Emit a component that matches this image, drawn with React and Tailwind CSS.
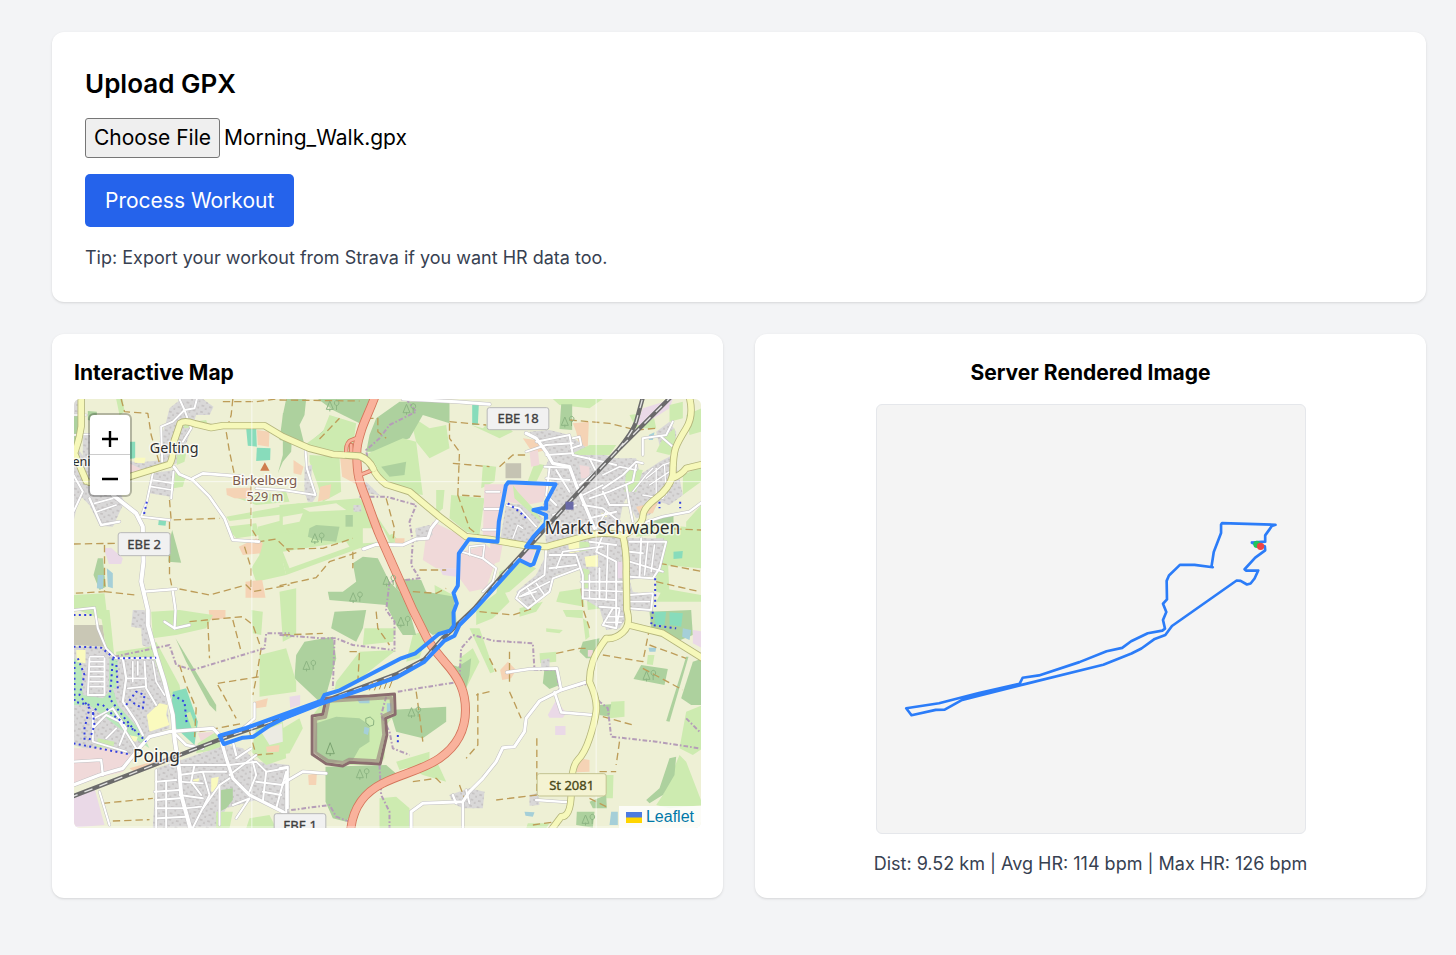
import React from "react";

const GRASS = "#cdebb0";
const WOOD = "#add19e";
const TOWN = "#d9d8d8";
const PINK = "#f0d9d9";
const LILAC = "#ead9e7";
const ORCHARD = "#f5d3b5";
const PITCH = "#88dcbb";
const SCHOOL = "#fafabe";
const WATER = "#a5cfd8";
const CREAM = "#eef0d5";

/* Land use, painted in order: [fill, polygon points] */
const AREAS = [
  // scattered meadows
  [GRASS, "140,12 160,12 165,50 150,60"],
  [GRASS, "215,770 260,740 330,870 345,960 300,900"],
  [GRASS, "480,300 560,330 660,320 650,290 560,300"],
  [GRASS, "470,395 560,385 570,420 500,430"],
  [GRASS, "545,645 580,650 575,720 550,715"],
  [GRASS, "1095,570 1150,600 1165,700 1130,710 1100,650"],
  [GRASS, "1030,720 1080,700 1050,790 1010,800"],
  [GRASS, "1170,790 1210,760 1230,800 1190,880 1170,860"],
  [GRASS, "1220,640 1300,580 1320,620 1270,670 1220,690"],
  [GRASS, "1205,90 1240,100 1280,60 1330,110 1290,130"],
  [GRASS, "1020,60 1080,100 1130,90 1140,160 1080,190 1040,140"],
  [GRASS, "1760,400 1790,380 1800,600 1760,590"],
  [GRASS, "1680,60 1750,50 1760,100 1700,100"],
  [GRASS, "1850,60 1895,40 1895,110 1860,120"],
  [GRASS, "1840,240 1895,215 1895,260 1840,300"],
  [GRASS, "1690,395 1760,385 1750,420 1700,425"],
  [GRASS, "1550,590 1600,580 1600,640 1555,645"],
  [GRASS, "1350,640 1420,620 1400,650 1350,665"],
  [GRASS, "1200,700 1230,700 1275,830 1262,835"],
  [GRASS, "12,600 105,595 115,680 12,640"],
  [GRASS, "590,1085 660,1075 700,1000 690,970 640,1000"],
  [GRASS, "1000,1110 1100,1095 1130,1160 1060,1140"],
  // north west
  [TOWN, "12,12 25,12 25,160 90,255 150,290 165,320 130,395 90,392 60,330 30,300 12,380"],
  [TOWN, "40,120 75,118 75,160 190,200 230,200 280,195 280,215 180,240 60,260 40,200"],
  [TOWN, "300,40 335,12 400,12 432,35 420,60 380,60 352,140 322,205 275,215 270,140 290,80"],
  [TOWN, "245,235 315,225 305,305 240,295"],
  [WOOD, "12,60 28,60 28,150 12,170"],
  [WOOD, "55,48 82,50 82,80 55,75"],
  [GRASS, "318,230 350,240 340,275 312,280"],
  [GRASS, "338,85 410,75 415,90 345,100"],
  [GRASS, "322,180 350,175 345,200 322,210"],
  [WOOD, "640,55 672,45 665,170 640,200 625,235 640,180"],
  [PITCH, "530,100 560,100 562,155 535,152"],
  [PITCH, "562,158 603,160 602,195 560,198"],
  [ORCHARD, "562,105 600,110 598,155 565,150"],
  [PITCH, "175,140 197,140 197,190 175,192"],
  [SCHOOL, "195,188 228,188 225,205 195,203"],
  [PINK, "180,205 215,222 210,240 180,238"],
  [ORCHARD, "470,280 545,278 545,312 495,310 472,300"],
  [GRASS, "470,365 690,325 700,350 480,378"],
  [GRASS, "565,395 660,370 720,380 720,440 640,500 650,540 560,560 545,520 570,480"],
  [ORCHARD, "508,455 560,430 580,445 572,475 520,480"],
  [ORCHARD, "528,560 578,555 588,608 528,608"],
  [WOOD, "308,405 335,503 296,500 302,430"],
  [LILAC, "103,460 125,458 160,490 155,507 118,507"],
  [WOOD, "85,490 100,490 105,540 110,575 90,585 72,540"],
  [WATER, "85,540 102,540 100,582 82,580"],
  [WATER, "112,520 130,535 130,580 115,575"],
  [ORCHARD, "418,645 468,645 468,670 420,675"],
  [PITCH, "268,375 290,378 288,392 266,390"],
  // north centre
  [WOOD, "650,12 710,12 705,60 690,90 705,150 630,135 640,60"],
  [WOOD, "745,12 900,12 890,40 870,85 790,45"],
  [WOOD, "770,100 790,130 755,150 735,130"],
  [WOOD, "920,70 990,20 1140,20 1140,85 1060,60 1020,130 960,150 920,170 890,170 900,120"],
  [GRASS, "780,60 860,85 850,160 800,175 705,150 760,110"],
  [GRASS, "720,180 810,185 815,290 760,320 745,270 720,200"],
  [GRASS, "885,180 1000,130 1040,140 1060,300 1000,290 950,260 900,230"],
  [WOOD, "935,215 1010,200 1005,240 960,245"],
  [ORCHARD, "812,190 855,190 865,270 818,245"],
  [ORCHARD, "672,195 702,215 695,240 672,235"],
  [ORCHARD, "752,275 785,268 780,310 745,320"],
  [TOWN, "705,215 728,210 725,250 742,300 730,320 715,320 705,290"],
  [GRASS, "630,330 870,310 920,360 990,440 870,460 650,540 640,500 700,420 630,410"],
  [CREAM, "640,365 700,355 690,380 640,390"],
  [CREAM, "700,340 800,325 830,345 720,350"],
  [WOOD, "720,400 740,390 810,395 800,440 740,435 715,425"],
  [WOOD, "828,360 850,360 850,395 828,395"],
  [CREAM, "640,470 830,440 840,455 660,520"],
  [CREAM, "880,400 940,400 960,440 880,445"],
  [TOWN, "870,280 890,260 935,305 955,345 930,365 900,340"],
  [CREAM, "895,295 1000,315 1010,400 960,420 920,360"],
  [TOWN, "852,330 875,330 875,350 852,350"],
  [GRASS, "1100,285 1125,285 1120,340 1100,360"],
  [GRASS, "1145,300 1245,310 1230,420 1190,410 1140,370"],
  [GRASS, "1240,210 1280,215 1275,260 1235,280"],
  [PITCH, "1208,28 1228,28 1225,90 1208,90"],
  [ORCHARD, "975,430 1005,430 1005,445 978,450"],
  [PINK, "1090,380 1190,430 1165,475 1162,520 1100,520 1060,495 1070,420"],
  [PINK, "1175,470 1250,450 1285,480 1250,580 1200,590 1170,550"],
  [LILAC, "1110,520 1165,520 1160,545 1120,540"],
  [PINK, "1245,268 1310,268 1290,430 1240,420"],
  [PINK, "1310,265 1440,270 1420,320 1370,330 1310,320"],
  [TOWN, "1310,325 1370,330 1420,370 1370,450 1290,450"],
  [GRASS, "1330,270 1345,290 1400,350 1420,385 1380,350 1335,310"],
  [TOWN, "1038,400 1080,390 1090,420 1060,435 1040,440"],
  // central woods
  [WOOD, "850,505 880,485 925,490 960,560 1000,600 1020,650 1040,720 1000,720 980,690 950,630 780,615 775,590 820,590 860,560"],
  [WOOD, "975,550 1055,555 1070,590 1155,605 1150,700 1090,720 1050,690 1040,640 980,580"],
  [WOOD, "795,650 890,645 880,700 860,740 785,700"],
  [GRASS, "630,590 680,580 680,720 640,740"],
  [GRASS, "885,700 980,700 970,740 880,750"],
  [WOOD, "705,740 790,725 800,790 770,900 750,920 675,850 680,780"],
  [GRASS, "570,780 650,760 680,860 680,890 570,905"],
  [LILAC, "660,905 692,900 692,930 662,940"],
  [GRASS, "870,770 980,765 860,860 795,885 800,860"],
  [WOOD, "1120,800 1165,815 1205,790 1200,840 1190,880 1150,850"],
  [WOOD, "960,945 1130,935 1130,980 1060,1030 980,1010"],
  [GRASS, "730,960 770,910 970,900 975,960 950,990 945,1090 930,1110 775,1110 735,1070"],
  [WOOD, "740,985 800,965 870,970 900,990 900,1040 870,1060 850,1095 770,1105 735,1070"],
  [WATER, "860,910 900,910 900,925 870,925"],
  [WATER, "952,925 966,925 966,955 952,950"],
  [WATER, "885,995 900,1000 895,1020 882,1015"],
  [WOOD, "768,1115 950,1110 985,1140 900,1180 850,1250 830,1280 790,1270 768,1220"],
  [GRASS, "980,1100 1080,1070 1080,1100 990,1125"],
  [GRASS, "930,1210 980,1205 1020,1240 1020,1300 930,1300"],
  [ORCHARD, "716,1140 742,1135 740,1170 718,1170"],
  [TOWN, "1140,1200 1200,1180 1245,1190 1240,1240 1180,1240 1150,1225"],
  // north east
  [GRASS, "1450,12 1600,12 1560,40 1470,30"],
  [WOOD, "1475,28 1508,28 1508,105 1470,102"],
  [ORCHARD, "1510,85 1558,80 1555,155 1530,155 1520,110"],
  [LILAC, "1720,40 1810,12 1800,40 1720,90 1700,90"],
  [GRASS, "1800,30 1840,20 1840,70 1800,80"],
  [TOWN, "1380,110 1440,105 1500,120 1560,165 1640,190 1700,190 1710,230 1660,330 1650,380 1600,410 1500,430 1430,450 1420,330 1450,270 1430,210 1440,190"],
  [TOWN, "1710,240 1770,200 1810,180 1830,250 1840,300 1800,330 1770,320 1740,360 1700,370 1670,310"],
  [TOWN, "1760,110 1800,80 1820,110 1820,150 1770,150"],
  [WATER, "1738,120 1755,112 1750,135 1738,135"],
  [TOWN, "1440,460 1600,420 1690,430 1800,430 1780,500 1760,540 1680,555 1690,590 1745,600 1740,650 1685,645 1650,700 1610,705 1590,640 1540,610 1530,520 1460,540 1430,600 1370,640 1340,590 1400,540"],
  [GRASS, "1395,205 1425,210 1400,262 1375,258"],
  [ORCHARD, "1360,130 1400,135 1430,165 1390,175"],
  [PINK, "1380,170 1405,165 1410,210 1385,215"],
  ["#c5c3b3", "1308,205 1355,205 1355,250 1308,250"],
  [PINK, "1530,210 1560,215 1560,250 1535,250"],
  [GRASS, "1500,180 1560,150 1640,150 1620,180"],
  [GRASS, "1670,220 1720,225 1700,290 1665,290"],
  [GRASS, "1780,130 1815,100 1820,150 1800,180 1760,170"],
  [GRASS, "1785,390 1895,400 1895,520 1780,510"],
  [GRASS, "1780,580 1895,600 1895,620 1760,620"],
  [PITCH, "1812,470 1840,468 1838,490 1812,492"],
  [WOOD, "1750,370 1812,358 1812,385 1750,385"],
  [ORCHARD, "1700,335 1765,322 1750,355 1710,358"],
  [GRASS, "1850,380 1895,330 1895,400 1850,405"],
  [SCHOOL, "1495,440 1530,430 1530,470 1500,475"],
  [SCHOOL, "1545,485 1585,480 1585,515 1550,515"],
  [SCHOOL, "1595,355 1615,350 1612,365 1595,368"],
  [GRASS, "1530,440 1560,440 1560,465 1530,470"],
  [GRASS, "1540,520 1560,525 1560,580 1545,580"],
  [LILAC, "1640,500 1660,500 1660,550 1640,550"],
  [GRASS, "1470,590 1540,580 1545,635 1460,620"],
  [PINK, "1262,440 1300,445 1290,500 1262,510"],
  [GRASS, "1290,530 1355,500 1400,520 1320,590 1280,600"],
  [LILAC, "1340,500 1380,460 1400,460 1380,510"],
  // south east
  [WOOD, "1740,650 1865,645 1870,720 1820,740 1745,700"],
  [PITCH, "1755,650 1790,650 1785,690 1755,690"],
  [PITCH, "1800,652 1840,655 1835,695 1800,690"],
  [WATER, "1840,700 1865,705 1860,735 1838,725"],
  [LILAC, "1870,705 1900,710 1900,760 1870,745"],
  [GRASS, "1480,645 1540,645 1540,670 1490,665"],
  [GRASS, "1430,700 1480,705 1470,715 1430,710"],
  [GRASS, "1540,670 1555,680 1560,725 1548,735"],
  [WOOD, "1540,740 1590,730 1580,790 1550,790 1530,770"],
  [PINK, "1555,765 1570,765 1570,785 1555,785"],
  [GRASS, "1410,775 1460,770 1460,800 1412,805"],
  [TOWN, "1415,795 1440,790 1440,820 1415,820"],
  [WOOD, "1425,820 1465,822 1470,870 1440,882 1420,865"],
  [ORCHARD, "1292,825 1315,800 1340,825 1325,850 1298,855"],
  [LILAC, "1435,960 1460,915 1490,955 1480,968 1440,968"],
  [LILAC, "1457,993 1488,993 1488,1020 1457,1020"],
  [WOOD, "1715,810 1795,822 1785,870 1692,852"],
  [GRASS, "1735,780 1755,780 1750,810 1732,808"],
  [WATER, "1737,758 1760,758 1758,770 1740,770"],
  [GRASS, "1625,920 1665,918 1665,965 1620,970"],
  [WOOD, "1590,930 1625,928 1620,965 1590,960"],
  [WOOD, "1850,785 1857,785 1800,980 1790,978"],
  [WOOD, "1870,800 1900,790 1900,930 1865,930 1835,910"],
  [GRASS, "1850,950 1900,930 1900,1060 1870,1080 1830,1060"],
  [GRASS, "1780,1200 1830,1080 1850,1100 1900,1230 1800,1240 1760,1230"],
  [WOOD, "1800,1090 1820,1085 1815,1140 1780,1200 1740,1225 1730,1215 1770,1180"],
  [ORCHARD, "1530,1090 1560,1095 1560,1130 1520,1132"],
  [GRASS, "1610,1140 1632,1140 1630,1210 1600,1210"],
  [WOOD, "1560,1220 1610,1200 1612,1240 1570,1240"],
  [WOOD, "1522,1250 1575,1250 1570,1298 1520,1290"],
  [WATER, "1625,1250 1645,1250 1645,1290 1620,1290"],
  [WATER, "1365,1250 1395,1252 1390,1265 1368,1262"],
  [TOWN, "1380,1200 1405,1195 1410,1230 1380,1232"],
  [GRASS, "1375,1285 1440,1285 1430,1300 1370,1300"],
  // south west
  [TOWN, "190,645 225,645 245,700 240,760 218,750 215,700 185,695"],
  [GRASS, "245,650 330,645 430,660 410,700 320,720 250,730"],
  ["#c9c7b5", "12,690 100,690 108,755 12,750"],
  [GRASS, "92,645 120,645 135,790 110,760"],
  [GRASS, "140,770 240,755 245,790 140,790"],
  [TOWN, "12,755 110,755 140,795 255,795 290,900 300,1000 240,1020 170,1100 12,1050"],
  ["#b9e8bb", "12,790 35,800 40,900 100,910 130,880 145,930 215,1010 240,1060 150,1000 60,930 12,930"],
  ["#b9e8bb", "120,790 145,795 140,880 118,880"],
  [WOOD, "318,730 440,930 440,950 420,930 350,800"],
  [PITCH, "310,890 350,880 385,980 375,1050 320,1000 305,930"],
  [GRASS, "350,955 362,950 385,1010 370,1010"],
  [SCHOOL, "232,960 270,925 295,930 290,960 300,990 240,1010"],
  [SCHOOL, "20,765 48,765 48,805 22,800"],
  [SCHOOL, "175,1020 205,1025 200,1040 178,1035"],
  [PINK, "12,1060 110,1060 190,1080 160,1130 12,1165"],
  [GRASS, "85,1030 135,1040 130,1060 80,1055"],
  [PINK, "385,1015 430,1010 430,1035 395,1040"],
  [ORCHARD, "435,1050 460,1045 460,1068 435,1065"],
  [GRASS, "440,1010 460,1060 380,1075 385,1045"],
  [ORCHARD, "180,1120 300,1085 300,1100 200,1135"],
  [LILAC, "12,1210 75,1180 105,1290 12,1298"],
  [TOWN, "260,1120 470,1050 520,1060 560,1100 660,1110 660,1260 560,1215 470,1240 440,1298 250,1298"],
  [WOOD, "455,1185 490,1180 490,1215 470,1240 450,1250"],
  [SCHOOL, "425,1150 448,1145 440,1190 425,1190"],
  [SCHOOL, "362,1155 390,1150 385,1165 365,1170"],
  [GRASS, "440,1250 490,1250 480,1300 440,1300"],
  [GRASS, "560,1000 640,980 650,1090 590,1110 545,1070"],
  ["#ecebe3", "575,1010 638,985 640,1040 600,1050"],
  [ORCHARD, "555,920 595,910 590,935 560,940"],
  [ORCHARD, "590,1055 630,1050 628,1070 592,1072"],
  [GRASS, "540,1270 600,1260 620,1300 530,1300"],
];

/* White streets: [width, points] */
const STREETS = [
  [12, "130,300 200,355 220,395 222,500 215,560 235,645 235,690 260,780 285,860 310,960 315,1030 330,1130 335,1200 362,1298"],
  [8, "313,215 330,238 370,255 420,305 465,370 490,435 568,440"],
  [8, "370,250 400,235 520,245"],
  [6, "250,235 232,320 215,365 300,375"],
  [6, "312,230 305,310"],
  [6, "330,12 345,45 310,80 275,95 278,200"],
  [6, "382,12 375,40 345,45 365,100 340,140"],
  [5, "250,255 310,265"],
  [5, "245,275 308,285"],
  [7, "60,310 95,390 150,380"],
  [5, "75,325 130,310"],
  [5, "82,350 140,330"],
  [6, "12,350 40,290 12,240"],
  [5, "12,120 60,118"],
  [5, "12,60 50,60"],
  [7, "222,590 320,582"],
  [7, "310,590 318,645 315,700"],
  [6, "12,645 75,638 85,700 110,760 140,790 260,790"],
  [7, "285,680 315,700 360,690"],
  [9, "1000,12 1160,20 1260,28"],
  [6, "708,165 712,220 738,300 640,285 560,280"],
  [9, "882,462 920,448 1000,450 1040,432 1075,430 1085,400 1105,375"],
  [6, "1175,470 1240,490 1280,520 1270,560 1240,590"],
  [5, "1200,480 1200,455 1245,450 1240,490"],
  [6, "1250,290 1290,290"],
  [6, "1245,342 1290,342"],
  [6, "1240,404 1280,404"],
  [5, "1310,330 1350,340 1400,395"],
  [4, "1330,430 1345,390 1360,400"],
  [10, "1370,115 1400,130 1430,170 1450,205 1500,215 1520,270 1550,340 1575,400"],
  [6, "1400,140 1500,120 1510,180 1600,200 1640,210"],
  [6, "1370,170 1430,150 1510,145"],
  [6, "1430,180 1510,175"],
  [6, "1425,215 1500,218"],
  [6, "1440,220 1430,300 1460,330"],
  [6, "1430,250 1500,255"],
  [6, "1510,130 1530,125 1535,150 1505,160"],
  [6, "1460,225 1500,290"],
  [6, "1560,190 1580,230 1530,270"],
  [6, "1600,280 1660,240 1700,200 1720,205"],
  [6, "1560,310 1620,290 1690,260 1700,210"],
  [5, "1600,240 1650,215 1700,225"],
  [5, "1540,300 1600,270"],
  [6, "1540,330 1600,340 1650,380 1655,415"],
  [6, "1600,290 1620,330 1680,330"],
  [6, "1560,370 1640,350"],
  [6, "1670,270 1680,330 1690,380"],
  [5, "1580,400 1610,350"],
  [5, "1450,360 1520,330"],
  [6, "1720,180 1720,130 1790,120 1810,80"],
  [6, "1775,125 1810,155"],
  [7, "1700,390 1780,365 1860,350 1900,320"],
  [4, "1730,250 1780,210 1810,200"],
  [4, "1740,270 1800,230"],
  [4, "1720,300 1780,310 1810,260"],
  [4, "1690,290 1730,240 1750,220"],
  [4, "1760,220 1760,300"],
  [4, "1785,210 1790,300"],
  [6, "1430,460 1425,540 1350,590 1340,610 1375,640 1440,590 1450,550 1530,520"],
  [5, "1375,580 1400,620"],
  [5, "1400,565 1425,600"],
  [5, "1360,600 1400,580 1440,560"],
  [5, "1350,605 1400,590"],
  [6, "1440,480 1520,480 1540,540 1540,610 1640,615"],
  [6, "1440,520 1520,510"],
  [5, "1460,520 1480,470 1600,455"],
  [6, "1535,560 1660,560"],
  [6, "1600,420 1580,470 1640,500 1640,690"],
  [6, "1560,440 1640,450"],
  [6, "1590,520 1590,610"],
  [5, "1615,450 1610,615"],
  [5, "1540,585 1670,590"],
  [5, "1560,540 1560,610"],
  [6, "1680,440 1790,440 1770,520 1750,550 1680,545"],
  [6, "1680,470 1720,475"],
  [6, "1680,500 1780,530"],
  [6, "1680,600 1750,595 1745,645 1680,640"],
  [5, "1680,620 1740,620"],
  [5, "1735,440 1725,540"],
  [6, "1715,430 1710,545"],
  [5, "1755,450 1745,530"],
  [6, "1590,635 1650,640"],
  [6, "1630,640 1600,690 1640,700 1650,645"],
  [5, "1620,665 1660,665"],
  [5, "1610,682 1655,682"],
  [8, "1312,832 1380,822 1462,820 1475,885"],
  [9, "1560,858 1475,885 1410,918 1370,970 1365,1010 1335,1055 1300,1058 1280,1100 1240,1150 1200,1190 1180,1220 1060,1225 1025,1250 1025,1300"],
  [8, "1455,892 1475,952 1570,960"],
  [7, "1180,1220 1180,1300"],
  [7, "1150,1200 1160,1225"],
  [6, "1190,1185 1200,1225"],
  [7, "1400,1215 1500,1222"],
  [10, "12,1170 90,1140 160,1120 200,1070 240,1025 300,1010 430,1000 450,1020 470,1090 490,1150 540,1200 640,1250 700,1300"],
  [7, "12,1100 95,1095 100,1140"],
  [8, "315,1015 350,1050 400,1060"],
  [7, "160,790 170,850 160,920 200,980 220,1020"],
  [6, "60,790 55,900 105,900 105,790"],
  [5, "62,785 102,785"],
  [5, "62,800 102,800"],
  [5, "62,815 102,815"],
  [5, "62,830 102,830"],
  [5, "62,845 102,845"],
  [5, "62,860 102,860"],
  [5, "62,875 102,875"],
  [6, "70,950 70,1040 170,1070"],
  [6, "70,1000 110,960 150,980 200,1060"],
  [6, "110,1030 140,1000"],
  [6, "130,940 170,1000 150,1050"],
  [5, "75,970 130,940"],
  [5, "190,800 190,860"],
  [6, "225,800 230,880 260,930"],
  [5, "170,850 230,850"],
  [5, "205,800 205,840"],
  [5, "175,880 225,875"],
  [5, "250,800 260,860 285,900"],
  [6, "260,1125 260,1298"],
  [6, "260,1160 320,1155"],
  [6, "255,1190 330,1185"],
  [6, "260,1215 330,1210"],
  [6, "260,1240 340,1240"],
  [6, "265,1270 350,1265"],
  [6, "290,1160 290,1298"],
  [6, "320,1110 470,1110"],
  [6, "375,1110 365,1160 395,1200"],
  [6, "330,1140 400,1130 420,1200 370,1298"],
  [6, "400,1130 470,1130"],
  [5, "330,1160 400,1165"],
  [6, "330,1200 400,1210"],
  [5, "345,1240 395,1235"],
  [6, "480,1110 560,1100 590,1130 650,1120"],
  [6, "480,1140 520,1110 560,1080"],
  [6, "540,1190 560,1140 550,1100"],
  [6, "580,1220 590,1130"],
  [6, "620,1240 650,1130 650,1300"],
  [6, "560,1160 640,1170"],
  [6, "580,1190 635,1200"],
  [6, "500,1270 540,1210 490,1230"],
  [6, "400,1240 450,1170 480,1150"],
  [6, "450,1290 450,1170"],
  [6, "90,1190 120,1290"],
  [7, "500,1080 490,1040"],
  [7, "555,925 555,970 520,1000"],
  [6, "500,1090 545,1060"],
  [8, "640,1165 700,1130 770,1135"],
  [6, "630,1120 655,1115 655,1240"],
];

/* Farm tracks: brown dashed lines */
const TRACKS = [
  "155,12 165,50 235,55 245,120 270,205",
  "490,12 485,60 470,110 480,170 495,240",
  "460,20 560,20 620,12",
  "300,315 305,375 450,370",
  "545,270 545,400 570,440 620,432 660,470",
  "12,447 140,445",
  "105,450 105,590 12,595",
  "105,590 200,600",
  "300,380 300,540 310,590",
  "330,582 420,600 530,570 550,590 660,570",
  "525,455 545,520 545,580",
  "650,462 760,460 850,430",
  "630,572 740,548 780,500 870,470",
  "850,470 850,520",
  "630,15 870,18",
  "750,132 810,70",
  "890,70 925,70 925,110 950,130",
  "950,310 975,400 970,440",
  "1140,85 1140,130 1170,170 1165,300 1240,305",
  "1165,300 1200,400 1250,440",
  "1150,205 1260,215",
  "1140,80 1250,90",
  "1050,525 1130,525",
  "1030,590 1100,595 1130,580",
  "1290,215 1330,180 1370,180",
  "1500,75 1620,85 1700,105 1760,100",
  "1780,400 1895,405",
  "1760,560 1890,590",
  "1770,505 1900,530",
  "360,680 410,675 520,665 550,690 575,760 560,850 550,900",
  "415,680 420,790",
  "490,675 515,770",
  "330,810 350,870 380,940 375,1030",
  "445,865 570,845",
  "445,870 500,970",
  "100,1225 250,1210",
  "130,1278 240,1274",
  "540,1010 560,1080 620,1075",
  "390,1010 520,985",
  "640,720 760,715",
  "840,770 870,770 865,860",
  "1040,890 1050,960 1060,1040",
  "920,650 925,700 960,750",
  "1260,790 1280,830",
  "1320,770 1320,860",
  "1320,890 1355,970",
  "1402,1030 1402,1200 1280,1215",
  "1225,895 1225,1050 1190,1090",
  "1260,890 1220,900",
  "1030,1160 1100,1150 1120,1170",
  "1170,1170 1185,1210",
  "1460,775 1530,760 1550,760",
  "1600,780 1720,800 1740,700",
  "1720,820 1840,885",
  "1740,750 1850,790",
  "1600,965 1690,990",
  "1650,1040 1640,1110",
  "1590,1130 1640,1130",
  "1230,650 1330,660 1390,640",
  "1535,580 1540,640 1560,700",
  "1560,1210 1620,1240",
  "1390,1290 1460,1280",
];

/* Municipal boundaries: mauve dashed lines */
const BOUNDARIES = [
  "1010,12 1040,50 960,90 930,130 890,165 900,230",
  "870,305 950,305 1040,330 1020,380 1030,440 1025,510 1050,550 960,560 950,645 975,680 975,770",
  "135,785 300,750 320,810 370,825 585,760 590,715 660,715",
  "630,720 760,730 800,730 850,750 970,765",
  "795,735 790,880",
  "985,890 1170,860",
  "1170,850 1175,760 1210,720 1270,737 1390,745 1395,825 1460,825 1470,885 1560,865 1590,920 1615,940 1625,1025 1760,1040 1890,1060",
  "950,905 935,960 960,1010 970,1060 1020,1080",
  "930,1110 935,1200 960,1250 960,1300",
  "665,1245 780,1230 800,1265 840,1280",
  "1850,970 1890,1010",
];

/* Streams and footways: blue dots */
const DOTTED = [
  "25,790 45,840 30,900 60,940 45,1000 45,1040",
  "130,790 125,860 120,910 150,950 190,1000 230,1040",
  "15,800 15,920 60,930",
  "145,880 140,800",
  "12,755 95,758 135,790 260,788",
  "12,1045 180,1078",
  "170,930 200,890 225,900 220,940 185,920",
  "310,900 345,920 352,990",
  "12,660 75,660",
  "100,930 130,960 200,1010",
  "70,960 90,920",
  "60,1035 75,990 70,950",
  "232,320 222,365",
  "1315,325 1350,350 1370,370",
  "1757,550 1757,645",
  "1750,650 1745,690 1820,700",
  "1770,320 1770,340",
  "1832,320 1832,340",
  "985,1020 985,1050",
];

const MOTORWAY =
  "M918 0C900 50 884 78 876 105S860 150 862 180C862 240 870 262 885 300S915 385 930 420L1030 645L1060 705C1080 750 1100 770 1125 800C1170 850 1188 890 1188 945C1188 1010 1160 1055 1110 1090C1060 1125 985 1140 940 1165C890 1190 850 1230 843 1310";
const SLIPS = "M874 124L840 138Q827 150 831 178M866 242L902 228M845 150V172";
const YELLOW =
  "M35 0V95Q30 135 15 175L50 258M60 262L180 245L300 208Q312 190 310 150L332 85Q345 75 375 86L425 98L460 92H585L640 125L720 160L790 178L870 183Q900 195 910 220T950 268L1020 290L1110 365L1190 425L1260 433L1370 452L1430 455L1530 428Q1600 405 1660 422M1858 0Q1875 60 1850 100T1818 160T1810 240Q1800 280 1760 310T1720 365T1660 422Q1672 470 1670 530L1672 645Q1685 690 1660 712T1610 730Q1580 770 1570 800T1560 860Q1585 915 1580 950T1560 1030T1525 1095T1505 1190T1475 1265L1445 1305M1808 250Q1835 240 1850 220L1900 208M1678 690L1780 715L1900 790";
const RAIL =
  "M0 1208L460 1030L650 965L760 920L980 838L1065 793L1120 730L1215 640L1300 540L1410 420L1500 320L1645 165L1810 0M1645 165Q1690 110 1700 80L1722 0";
const ROUTE =
  "1392,345 1415,340 1430,341 1430,320 1458,268 1316,262 1309,272 1302,310 1288,380 1284,440 1225,435 1198,433 1168,475 1165,572 1152,594 1162,625 1152,652 1153,692 1142,707 1108,717 1038,775 995,790 808,887 765,900 756,917 630,963 530,999 450,1022 463,1047 520,1028 552,1025 600,992 650,967 760,924 980,848 1065,800 1125,737 1155,722 1170,690 1215,645 1350,495 1382,511 1392,507 1410,457 1370,455 1392,425 1428,385 1430,360 1392,345";

const RENDERED_ROUTE =
  "1148,127 1188,124 1188,105 1208,77 1219,73 1058,68 1055,72 1055,98 1033,155 1026,200 1030,201 975,194 931,194 898,226 891,242 892,298 880,311 890,336 880,360 886,386 878,392 834,400 784,424 757,444 710,454 628,487 506,527 457,534 448,552 325,580 205,611 106,626 122,647 195,631 222,630 272,602 325,588 448,557 700,495 785,461 815,446 855,417 887,405 907,378 1102,241 1114,242 1133,253 1144,250 1156,235 1167,211 1130,211 1126,207 1158,172 1188,150 1187,138 1165,133 1148,127";

function Shield({ x, y, w, h, label, tone = "grey" }) {
  const yellow = tone === "yellow";
  const ink = yellow ? "#4a4a18" : "#3f3f3f";
  return (
    <g>
      <rect
        x={x}
        y={y}
        width={w}
        height={h}
        rx="7"
        fill={yellow ? "#f4f3d2" : "#f1f1f1"}
        stroke={yellow ? "#c3c391" : "#b8b8b8"}
        strokeWidth="3"
      />
      <text
        x={x + w / 2}
        y={y + h / 2 + 14}
        textAnchor="middle"
        fontSize="39"
        fill={ink}
        stroke={ink}
        strokeWidth="1"
      >
        {label}
      </text>
    </g>
  );
}

function Place({ x, y, size, children, fill = "#2e2e2e" }) {
  return (
    <text
      x={x}
      y={y}
      textAnchor="middle"
      fontSize={size}
      fill={fill}
      stroke="#ffffff"
      strokeOpacity="0.7"
      strokeWidth="9"
      strokeLinejoin="round"
      paintOrder="stroke"
    >
      {children}
    </text>
  );
}

const TREES = [
  [785, 30], [1015, 40], [740, 428], [955, 555], [855, 605], [715, 810], [875, 1135], [1490, 78],
  [1030, 950], [1552, 1272], [998, 678], [1735, 840],
];

function MapTiles() {
  return (
    <svg
      viewBox="12 12 1884 1287"
      preserveAspectRatio="xMidYMid slice"
      className="block h-full w-full font-['Noto_Sans',sans-serif]"
      role="img"
      aria-label="Map of the route between Poing and Markt Schwaben"
    >
      <defs>
        <pattern id="houses" width="23" height="19" patternUnits="userSpaceOnUse" patternTransform="rotate(12)">
          <path d="M3 3h8v5h-8zM15 10h5v6h-5z" fill="#c6c3c3" />
        </pattern>
      </defs>
      <rect width="1910" height="1310" fill={CREAM} />
      {AREAS.map(([fill, points], i) => (
        <g key={i}>
          <polygon points={points} fill={fill} />
          {fill === TOWN && <polygon points={points} fill="url(#houses)" />}
        </g>
      ))}
      <g fill="none" strokeLinejoin="round" strokeLinecap="round">
        {TRACKS.map((p, i) => (
          <polyline key={i} points={p} stroke="#bd9c58" strokeWidth="4" strokeDasharray="22 12" strokeLinecap="butt" />
        ))}
        {BOUNDARIES.map((p, i) => (
          <polyline key={i} points={p} stroke="#b59db8" strokeWidth="6" strokeDasharray="14 6 5 6" strokeLinecap="butt" />
        ))}
        {STREETS.map(([w, p], i) => (
          <polyline key={i} points={p} stroke="#c2c0c2" strokeWidth={w + 3} />
        ))}
        {STREETS.map(([w, p], i) => (
          <polyline key={i} points={p} stroke="#ffffff" strokeWidth={w} />
        ))}
        {DOTTED.map((p, i) => (
          <polyline key={i} points={p} stroke="#3440e0" strokeWidth="6" strokeDasharray="6 10" strokeLinecap="butt" />
        ))}
        <path d={YELLOW} stroke="#b4b57c" strokeWidth="22" />
        <path d={YELLOW} stroke="#f6f8ba" strokeWidth="17" />
        <path d={MOTORWAY} stroke="#d4745a" strokeWidth="27" />
        <path d={SLIPS} stroke="#d4745a" strokeWidth="13" />
        <path d={MOTORWAY} stroke="#f9b29c" strokeWidth="22" />
        <path d={SLIPS} stroke="#f9b29c" strokeWidth="8" />
        <path d="M835 181L870 183Q900 195 910 220" stroke="#b4b57c" strokeWidth="22" />
        <path d="M825 180L870 183Q900 195 912 222" stroke="#f6f8ba" strokeWidth="17" />
        <path d={RAIL} stroke="#6b6b6b" strokeWidth="13" strokeLinecap="butt" />
        <path d={RAIL} stroke="#e2e2e2" strokeWidth="4" strokeDasharray="26 22" strokeLinecap="butt" />
        <path
          d="M770 910L900 903L975 897L977 958L948 970L952 1020L932 1107L840 1102L820 1113L770 1106L728 1078V963L760 958Z"
          stroke="#8a6c6e"
          strokeWidth="9"
        />
        <path
          d="M778 918L965 908L968 950L939 964L943 1020L924 1098L840 1093L820 1103L775 1097L738 1073V972L768 966Z"
          stroke="#a08b84"
          strokeOpacity="0.7"
          strokeWidth="10"
        />
        {TREES.map(([x, y], i) => (
          <path
            key={i}
            d={`M${x - 14} ${y + 12}L${x - 4} ${y - 12}L${x + 6} ${y + 12}ZM${x - 4} ${y + 12}V${y + 18}M${x + 16} ${y + 14}V${y + 2}M${x + 16} ${y + 2}a7 8 0 1 1 1 0`}
            stroke="#8db583"
            strokeWidth="3"
          />
        ))}
        <path d="M770 1075L782 1043L794 1075ZM782 1075V1082" stroke="#7ba371" strokeWidth="3" />
        <path d="M890 970L902 966L913 976L912 990L900 994L890 984Z" stroke="#8bb280" strokeWidth="3" />
        <path d="M900 885L910 860M915 885L925 858M930 882L940 855M945 880L955 852M960 878L970 852" stroke="#b58f45" strokeWidth="3" />
        <path d="M547 0V1310M1580 0V1310M0 260H1900M0 1296H1900" stroke="#ffffff" strokeOpacity="0.65" strokeWidth="3" />
      </g>
      <rect x="1488" y="320" width="24" height="24" fill="#6a6aa8" />
      <path d="M572 227L586 202L600 227Z" fill="#cf7c4d" />
      <Place x={314} y={174} size={43}>Gelting</Place>
      <Place x={586} y={271} size={40} fill="#7d5a4c">Birkelberg</Place>
      <Place x={586} y={319} size={38} fill="#7d5a4c">529 m</Place>
      <Place x={36} y={214} size={38}>eni</Place>
      <Shield x={146} y={413} w={156} h={69} label="EBE 2" />
      <Shield x={1253} y={38} w={185} h={66} label="EBE 18" />
      <Shield x={614} y={1256} w={155} h={69} label="EBE 1" />
      <Shield x={1403} y={1136} w={207} h={67} label="St 2081" tone="yellow" />
      <polyline
        points={ROUTE}
        fill="none"
        stroke="#3388ff"
        strokeWidth="12"
        strokeLinejoin="round"
        strokeLinecap="round"
      />
      <Place x={1629} y={418} size={52}>Markt Schwaben</Place>
      <Place x={261} y={1101} size={52}>Poing</Place>
    </svg>
  );
}

function InteractiveMap() {
  return (
    <div className="relative mt-[11px] h-[429px] overflow-hidden rounded-md">
      <MapTiles />
      <div className="absolute top-3.5 left-3.5 flex w-11 flex-col overflow-hidden rounded-md border-2 border-black/25 bg-white bg-clip-padding">
        <button type="button" aria-label="Zoom in" className="flex h-10 items-center justify-center border-b border-[#cccccc]">
          <svg viewBox="0 0 16 16" className="mt-2 size-4" stroke="#000" strokeWidth="2.4" aria-hidden="true">
            <path d="M0 8H16M8 0V16" />
          </svg>
        </button>
        <button type="button" aria-label="Zoom out" className="flex h-10 items-center justify-center">
          <svg viewBox="0 0 16 16" className="mt-2 size-4" stroke="#000" strokeWidth="2.4" aria-hidden="true">
            <path d="M0 8H16" />
          </svg>
        </button>
      </div>
      <a
        href="#leaflet"
        className="absolute right-0 bottom-0 flex h-[22px] items-center gap-1 bg-white/80 px-[7px] font-['Liberation_Sans',sans-serif] text-base text-[#0078a8]"
      >
        <svg viewBox="0 0 16 11" className="h-[11px] w-4" aria-hidden="true">
          <path fill="#4c7be1" d="M0 0h16v6H0z" />
          <path fill="#ffd500" d="M0 5.5h16V11H0z" />
        </svg>
        Leaflet
      </a>
    </div>
  );
}

function RenderedImage() {
  return (
    <div className="mt-4 aspect-square w-full max-w-[430px] overflow-hidden rounded-md border border-[#e5e7eb] bg-[#f4f4f4]">
      <svg viewBox="18 -288 1290 1290" className="block h-full w-full" role="img" aria-label="Rendered route">
        <polyline
          points={RENDERED_ROUTE}
          fill="none"
          stroke="#2b7cf8"
          strokeWidth="8"
          strokeLinejoin="round"
          strokeLinecap="round"
        />
        <circle cx="1163" cy="132" r="11" fill="#22c55e" />
        <circle cx="1174" cy="138" r="11" fill="#ef4444" />
      </svg>
    </div>
  );
}

export default function App() {
  return (
    <main className="min-h-screen bg-[#f3f4f6] pt-8 pr-[30px] pb-14 pl-[52px] font-['Inter',sans-serif] text-black">
      <section className="rounded-xl bg-white px-[33px] pt-[33px] pb-[30px] shadow-sm">
        <h2 className="text-[26px] leading-[38px] font-semibold">Upload GPX</h2>
        <form className="mt-[15px] flex flex-col items-start" onSubmit={(e) => e.preventDefault()}>
          <div className="flex items-center gap-1 text-[21px] leading-7">
            <input id="gpx" type="file" accept=".gpx" className="peer sr-only" />
            <label
              htmlFor="gpx"
              className="flex h-10 items-center rounded-[3px] border border-[#767676] bg-[#efefef] px-2"
            >
              Choose File
            </label>
            <span>Morning_Walk.gpx</span>
          </div>
          <button
            type="submit"
            className="mt-4 h-[53px] rounded-[5px] bg-[#2563eb] px-5 text-[21px] leading-7 text-white"
          >
            Process Workout
          </button>
        </form>
        <p className="mt-[17px] text-[18px] leading-7 text-[#374151]">
          Tip: Export your workout from Strava if you want HR data too.
        </p>
      </section>

      <div className="mt-8 grid grid-cols-2 gap-8">
        <section className="rounded-xl bg-white px-[22px] pt-6 pb-5 shadow-sm">
          <h3 className="text-[21px] leading-[30px] font-bold">Interactive Map</h3>
          <InteractiveMap />
        </section>
        <section className="flex flex-col items-center rounded-xl bg-white px-[22px] pt-6 pb-5 shadow-sm">
          <h3 className="text-[21px] leading-[30px] font-bold">Server Rendered Image</h3>
          <RenderedImage />
          <p className="mt-4 text-[18px] leading-7 text-[#374151]">
            Dist: 9.52 km | Avg HR: 114 bpm | Max HR: 126 bpm
          </p>
        </section>
      </div>
    </main>
  );
}
